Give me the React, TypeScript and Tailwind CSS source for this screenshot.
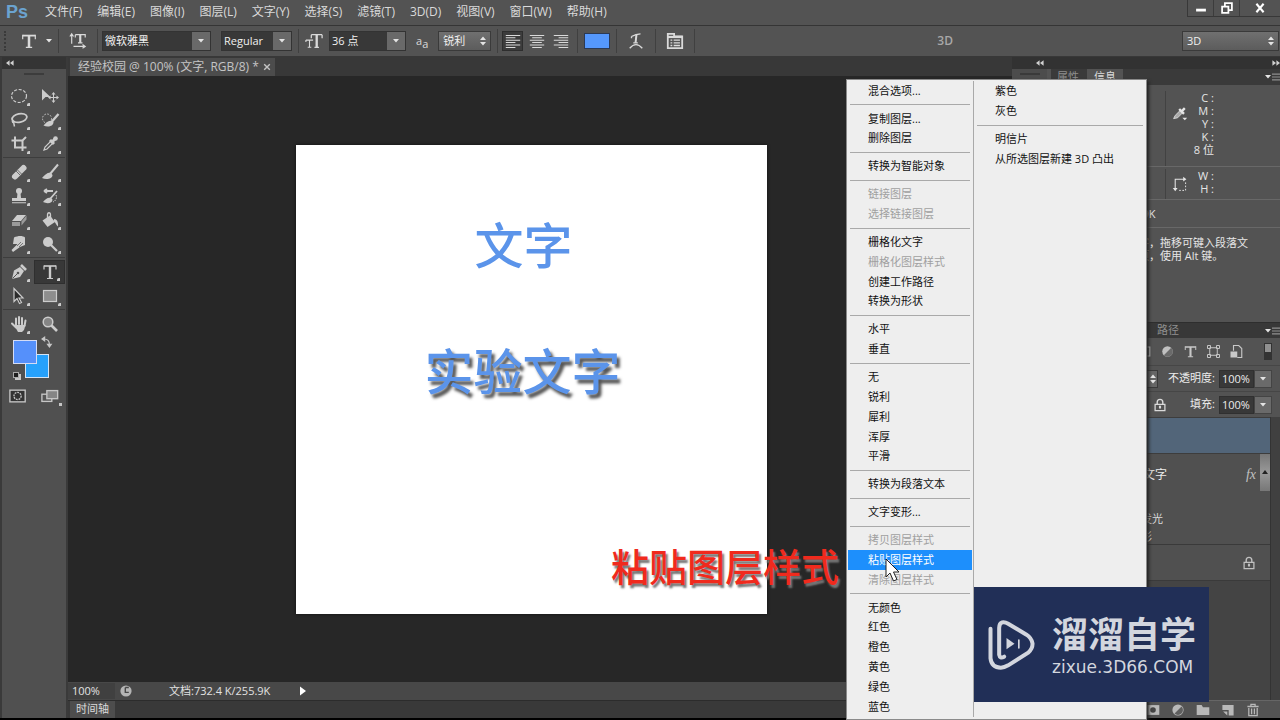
import type { ReactNode } from "react";
import clsx from "clsx";

const menus = ["文件(F)", "编辑(E)", "图像(I)", "图层(L)", "文字(Y)", "选择(S)", "滤镜(T)", "3D(D)", "视图(V)", "窗口(W)", "帮助(H)"];

type Item = { label: string; disabled?: boolean; active?: boolean };

const leftGroups: Item[][] = [
  [{ label: "混合选项..." }],
  [{ label: "复制图层..." }, { label: "删除图层" }],
  [{ label: "转换为智能对象" }],
  [{ label: "链接图层", disabled: true }, { label: "选择链接图层", disabled: true }],
  [{ label: "栅格化文字" }, { label: "栅格化图层样式", disabled: true }, { label: "创建工作路径" }, { label: "转换为形状" }],
  [{ label: "水平" }, { label: "垂直" }],
  [{ label: "无" }, { label: "锐利" }, { label: "犀利" }, { label: "浑厚" }, { label: "平滑" }],
  [{ label: "转换为段落文本" }],
  [{ label: "文字变形..." }],
  [{ label: "拷贝图层样式", disabled: true }, { label: "粘贴图层样式", active: true }, { label: "清除图层样式", disabled: true }],
  [{ label: "无颜色" }, { label: "红色" }, { label: "橙色" }, { label: "黄色" }, { label: "绿色" }, { label: "蓝色" }],
];

const rightGroups: Item[][] = [
  [{ label: "紫色" }, { label: "灰色" }],
  [{ label: "明信片" }, { label: "从所选图层新建 3D 凸出" }],
];

function Icon({ children, className = "size-5" }: { children: ReactNode; className?: string }) {
  return (
    <svg viewBox="0 0 20 20" className={clsx("shrink-0", className)} fill="none" stroke="currentColor" strokeWidth="1.5">
      {children}
    </svg>
  );
}

function SerifT({ className }: { className?: string }) {
  return (
    <Icon className={className}>
      <path d="M3 3v5M17 3v5M6.500 17h7" strokeWidth="1.300" />
      <path d="M3 4h14" strokeWidth="2" />
      <path d="M10 4v13" strokeWidth="2.800" />
    </Icon>
  );
}

const toolGroups: { name: string; art: ReactNode; selected?: boolean; plain?: boolean }[][] = [
  [
    { name: "椭圆选框", art: <ellipse cx="10" cy="10" rx="7.5" ry="6.5" strokeDasharray="3 1.6" strokeWidth="1.2" /> },
    {
      name: "移动",
      plain: true,
      art: (
        <>
          <path d="M2 3v11.500l3.500-3.500h5z" fill="currentColor" stroke="none" />
          <path d="M13.500 7.500v8M9.500 11.500h8" strokeWidth="1" />
          <path d="M13.500 6l2 2.500h-4zM13.500 17l2-2.500h-4zM8 11.500l2.500-2v4zM19 11.500l-2.500-2v4z" fill="currentColor" stroke="none" />
        </>
      ),
    },
    {
      name: "套索",
      art: (
        <>
          <ellipse cx="10.500" cy="8" rx="7.500" ry="4.200" transform="rotate(-12 10.500 8)" strokeWidth="1.800" />
          <path d="M4 10c-1.500 2 0 3 1.500 2.500M4.500 12l1 4.500" strokeWidth="1.500" />
        </>
      ),
    },
    {
      name: "快速选择",
      art: (
        <>
          <circle cx="7" cy="8.500" r="4.500" strokeDasharray="1.500 1.500" strokeWidth="1" />
          <path d="M18.500 4l-7 8" strokeWidth="2.400" />
          <path d="M12.500 11c-3-1-6 1-9 4.500 4 2 10 1 10-3.500z" fill="currentColor" stroke="none" />
        </>
      ),
    },
    { name: "裁剪", art: <path d="M6 2.500v11h11.500M2.500 6.500h11V17M13 7l4-4" strokeWidth="2" /> },
    {
      name: "吸管",
      art: (
        <>
          <path d="M4 16l1-3 6-6 2 2-6 6z" strokeWidth="1.200" />
          <path d="M10 6l4 4M12 8l4-4" strokeWidth="3" />
          <circle cx="15.500" cy="4.500" r="2.300" fill="currentColor" stroke="none" />
        </>
      ),
    },
  ],
  [
    {
      name: "修复画笔",
      art: (
        <>
          <path d="M6 14.500l8.500-8.500" strokeWidth="6" strokeLinecap="round" />
          <path d="M8.500 8l4 4M11 13l-4-4" stroke="#6b6b6b" strokeWidth="1" />
        </>
      ),
    },
    {
      name: "画笔",
      art: (
        <>
          <path d="M18 2.500l-8 9.500" strokeWidth="2" />
          <path d="M11 11c-3-1-5.500 1-9 5 4 2 10.500 1 10.500-3z" fill="currentColor" stroke="none" />
        </>
      ),
    },
    {
      name: "仿制图章",
      art: (
        <>
          <circle cx="10" cy="5" r="3" fill="currentColor" stroke="none" />
          <path d="M8.500 7h3l.5 5h-4zM3 12h14v3H3zM3 16.200h14v1H3z" fill="currentColor" stroke="none" />
        </>
      ),
    },
    {
      name: "历史记录画笔",
      art: (
        <>
          <path d="M17 5l-7 8M4 5h9M4 5l3-2M4 5l3 2" strokeWidth="1.800" />
          <path d="M11 12c-3-1-5.500 1-8 4 4 2 9.500 1.500 9.500-2.500z" fill="currentColor" stroke="none" />
          <path d="M16 9c1.500 3-.5 6-3 7" strokeWidth="1" strokeDasharray="1.500 1" />
        </>
      ),
    },
    {
      name: "橡皮擦",
      art: (
        <>
          <path d="M8 5h9l-5 6H3z" fill="currentColor" stroke="none" />
          <path d="M3 12h8v4H3zM12.500 11.500l5-6v4l-5 6z" fill="#9a9a9a" stroke="none" />
        </>
      ),
    },
    {
      name: "油漆桶",
      art: (
        <>
          <path d="M2.500 10.500l7.500-5 5 6.500-7.500 5z" fill="currentColor" stroke="none" />
          <path d="M7.500 10V5c0-3 3-3 3 0v3" strokeWidth="1.300" />
          <path d="M14 9c3 0 4.500 3 4 7.500-1.500-1-2.500-4-4-5z" fill="currentColor" stroke="none" />
        </>
      ),
    },
    {
      name: "涂抹",
      art: (
        <>
          <path d="M5 3.500c4-2 9-2 11 0V11l-5 2-7 5-1.500-2 6-6H4z" fill="currentColor" stroke="none" />
          <path d="M8 12l4-4M10 13l4-4" stroke="#777" strokeWidth="1" />
        </>
      ),
    },
    {
      name: "减淡",
      art: (
        <>
          <circle cx="8" cy="8" r="5" fill="currentColor" stroke="none" />
          <path d="M11 11l6 6" strokeWidth="2.200" />
        </>
      ),
    },
  ],
  [
    {
      name: "钢笔",
      art: (
        <>
          <path d="M3 17l2-8.500L11 5l4 4-4 6z" fill="currentColor" stroke="none" />
          <path d="M3.500 16.500l5-5" stroke="#555" strokeWidth="1" />
          <circle cx="9" cy="11" r="1.300" fill="#555" stroke="none" />
          <path d="M12 3l5 5" strokeWidth="2.600" />
        </>
      ),
    },
    {
      name: "横排文字",
      selected: true,
      art: (
        <>
          <path d="M4 3.500v4M16 3.500v4M7 16.500h6" strokeWidth="1.200" />
          <path d="M4 4h12" strokeWidth="1.600" />
          <path d="M10 4v12" strokeWidth="2.400" />
        </>
      ),
    },
    { name: "路径选择", art: <path d="M5 2.500v13l3-3 2.500 5 2-1-2.500-4.500h4z" fill="#2b2b2b" strokeWidth="1.200" /> },
    { name: "矩形", art: <rect x="3.500" y="4.500" width="13" height="11" fill="#8d8d8d" strokeWidth="1.200" /> },
  ],
  [
    {
      name: "抓手",
      art: (
        <>
          <path d="M7 11V4.500M10 10V3M13 10.500V4M15.500 12l1-5.500M3 9.500l4 4" strokeWidth="2" strokeLinecap="round" />
          <path d="M5 11h11.500l-1.500 5-2 2H9z" fill="currentColor" stroke="none" />
        </>
      ),
    },
    {
      name: "缩放",
      plain: true,
      art: (
        <>
          <circle cx="8" cy="8" r="4.800" fill="#858585" />
          <path d="M11.500 11.500l5.500 5.500" strokeWidth="2.600" />
        </>
      ),
    },
  ],
];

function Down() {
  return (
    <svg viewBox="0 0 6 4" className="h-1 w-1.5">
      <path d="M0 0h6L3 3.500z" fill="#e4e4e4" />
    </svg>
  );
}

function UpDown() {
  return (
    <svg viewBox="0 0 6 10" className="h-2.5 w-1.5">
      <path d="M0 4h6L3 .5zM0 6h6L3 9.500z" fill="#e4e4e4" />
    </svg>
  );
}

function Combo({ label, value, className }: { label: string; value: string; className: string }) {
  return (
    <div className={clsx("relative h-5 shrink-0 border border-[#333] bg-[#383838]", className)}>
      <select aria-label={label} className="h-full w-full appearance-none bg-transparent pr-5 pl-0.5 text-[#f0f0f0] outline-none">
        <option>{value}</option>
      </select>
      <span className="pointer-events-none absolute inset-y-0 right-0 flex w-[18px] items-center justify-center bg-[#696969]">
        <Down />
      </span>
    </div>
  );
}

function StepSelect({ label, value, className }: { label: string; value: string; className: string }) {
  return (
    <div className={clsx("relative h-5 shrink-0 border border-[#3a3a3a] bg-linear-to-b from-[#707070] to-[#5c5c5c]", className)}>
      <select aria-label={label} className="h-full w-full appearance-none bg-transparent pr-4 pl-1 text-[#f0f0f0] outline-none">
        <option>{value}</option>
      </select>
      <span className="pointer-events-none absolute inset-y-0 right-1 flex items-center">
        <UpDown />
      </span>
    </div>
  );
}

function Sep() {
  return <div className="h-6 w-px shrink-0 bg-[#404040]" />;
}

function Lines({ d }: { d: string }) {
  return (
    <Icon className="h-5 w-4">
      <path d={d} strokeWidth="1.300" />
    </Icon>
  );
}

function MenuBar() {
  return (
    <header className="flex h-[26px] shrink-0 items-start border-b border-[#353535]">
      <div className="w-10 pl-1.5 font-['Liberation_Sans',sans-serif] text-lg leading-6 font-bold text-[#6ba3d0]">Ps</div>
      <nav className="flex h-6 flex-1 items-center gap-[15px] pl-[5px] text-xs">
        {menus.map((m) => (
          <button key={m} className="whitespace-nowrap">{m}</button>
        ))}
      </nav>
      <div className="flex h-[17px] border-b border-l border-[#383838] text-white">
        <button aria-label="最小化" className="flex w-[26px] items-center justify-center border-r border-[#3c3c3c]">
          <Icon className="size-3.5"><path d="M3 13h14" strokeWidth="4" /></Icon>
        </button>
        <button aria-label="还原" className="flex w-[26px] items-center justify-center border-r border-[#3c3c3c]">
          <Icon className="size-3.5"><path d="M7 8V3h10v10h-4M3 8h9v9H3z" strokeWidth="2.500" /></Icon>
        </button>
        <button aria-label="关闭" className="flex w-10 items-center justify-center">
          <Icon className="size-3"><path d="M4 3l12 14M16 3L4 17" strokeWidth="3.500" /></Icon>
        </button>
      </div>
    </header>
  );
}

function OptionsBar() {
  return (
    <div className="flex h-[31px] shrink-0 items-center border-b border-[#383838] text-[11px]">
      <div className="ml-1 h-5 w-1 border-l-2 border-dotted border-[#3a3a3a]" />
      <button aria-label="工具预设" className="ml-3 flex items-center gap-2">
        <SerifT className="size-[18px]" />
        <Down />
      </button>
      <div className="ml-1.5"><Sep /></div>
      <button aria-label="切换文本取向" className="ml-2.5">
        <Icon className="size-[18px]">
          <path d="M7 3h11v3M7 3v3M10 12h5M3 3v10M1 5l2-3 2 3M5 16h13M15 14l3 2-3 2" strokeWidth="1.300" />
          <path d="M12.500 3v9" strokeWidth="2.400" />
        </Icon>
      </button>
      <div className="ml-2.5"><Sep /></div>
      <div className="ml-1 flex items-center gap-2.5">
        <Combo label="字体" value="微软雅黑" className="w-[109px]" />
        <Combo label="字体样式" value="Regular" className="w-[71px]" />
      </div>
      <div className="ml-1.5"><Sep /></div>
      <Icon className="ml-1.5 size-[18px]">
        <path d="M7 3h12M7 3v4M19 3v4M10.500 17h5" strokeWidth="1.400" />
        <path d="M13 3v14" strokeWidth="2.600" />
        <path d="M1 9h8M5 9v8M3 17h4M1 9v2" strokeWidth="1.200" />
      </Icon>
      <Combo label="字号" value="36 点" className="ml-1.5 w-[77px]" />
      <span className="ml-2.5 text-[11px]">a<sub className="text-[11px]">a</sub></span>
      <StepSelect label="消除锯齿" value="锐利" className="ml-2.5 w-[53px]" />
      <div className="ml-1.5"><Sep /></div>
      <div className="ml-1 flex items-center gap-1">
        <button aria-label="左对齐" className="flex h-5 w-[21px] items-center justify-center border border-[#2e2e2e] bg-[#3c3c3c]">
          <Lines d="M1 3h18M1 6h12M1 9h18M1 12h12M1 15h18M1 18h12" />
        </button>
        <button aria-label="居中对齐" className="flex w-[19px] justify-center">
          <Lines d="M1 3h18M4 6h12M1 9h18M4 12h12M1 15h18M4 18h12" />
        </button>
        <button aria-label="右对齐" className="flex w-[21px] justify-center">
          <Lines d="M1 3h18M7 6h12M1 9h18M7 12h12M1 15h18M7 18h12" />
        </button>
      </div>
      <div className="ml-1.5"><Sep /></div>
      <button aria-label="文本颜色" className="ml-1.5 h-4 w-[26px] border border-[#2c3a55] bg-[#5598fd]" />
      <div className="ml-1.5"><Sep /></div>
      <button aria-label="文字变形" className="ml-2.5">
        <Icon className="size-[18px]">
          <path d="M5 5q5-3 10-3M7 12h5M5 5v2M3 18q7-8 14 0" strokeWidth="1.500" />
          <path d="M10.500 3l-1 9" strokeWidth="2.200" />
        </Icon>
      </button>
      <div className="ml-2.5"><Sep /></div>
      <button aria-label="字符面板" className="ml-2.5">
        <Icon className="size-[18px]">
          <path d="M2 2h7v3h9v13H2z" strokeWidth="2" />
          <path d="M2 5.500h16" strokeWidth="2.500" />
          <path d="M5 9h2M8.500 9h7M5 12h2M8.500 12h7M5 15h2M8.500 15h7" strokeWidth="1.400" />
        </Icon>
      </button>
      <div className="ml-2.5"><Sep /></div>
      <span className="mr-[229px] ml-auto text-xs font-semibold text-[#a8a8a8]">3D</span>
      <StepSelect label="工作区" value="3D" className="mr-px w-[97px]" />
    </div>
  );
}

function Toolbox() {
  return (
    <aside className="w-[68px] shrink-0 border-r-2 border-l-2 border-[#3a3a3a] bg-[#505050]">
      <button aria-label="折叠工具栏" className="flex h-3 w-full items-center bg-[#343434] pl-1 text-[#d0d0d0]">
        <Icon className="size-2"><path d="M9 3v14L0 10zM19 3v14l-9-7z" fill="currentColor" stroke="none" /></Icon>
      </button>
      <div className="mx-auto mt-1 mb-[9px] h-0.5 w-5 bg-[#3c3c3c]" />
      {toolGroups.map((group, g) => (
        <div
          key={g}
          className={clsx("mx-px grid grid-cols-2", g < toolGroups.length - 1 && "mb-0.5 border-b border-[#3d3d3d] pb-px")}
        >
          {group.map((tool) => (
            <button
              key={tool.name}
              aria-label={tool.name}
              className={clsx(
                "relative flex h-6 items-center justify-center text-[#cccccc]",
                tool.selected && "border border-[#2f2f2f] bg-[#383838]",
              )}
            >
              <Icon className="size-5">{tool.art}</Icon>
              {!tool.plain && <span className="absolute right-1 bottom-0.5 size-[3px] rounded-tl-xs bg-[#cccccc]" />}
            </button>
          ))}
        </div>
      ))}
      <div className="relative mt-1 ml-[9px] h-[42px] w-[44px]">
        <button aria-label="背景色" className="absolute right-1.5 bottom-1 size-6 border border-[#d5e4f5] bg-[#26a1fc]" />
        <button aria-label="前景色" className="absolute top-0 left-0.5 size-6 border border-[#d5dcf5] bg-[#5590fb]" />
        <button aria-label="切换颜色" className="absolute -top-1 right-0.5 text-[#c6c6c6]">
          <Icon className="size-3">
            <path d="M5 5q9 0 9 9" strokeWidth="2" />
            <path d="M7 0v10L0 5zM9 13h10l-5 7z" fill="currentColor" stroke="none" />
          </Icon>
        </button>
        <span className="absolute bottom-0.5 left-1 size-1.5 bg-[#c6c6c6]" />
        <button aria-label="默认颜色" className="absolute bottom-1 left-0.5 size-1.5 border border-[#aaa] bg-[#1e1e1e]" />
      </div>
      <div className="mt-1 grid grid-cols-2 text-[#c6c6c6]">
        <button aria-label="快速蒙版" className="flex h-5 items-center justify-center">
          <Icon className="size-[18px]">
            <rect x="1" y="3.500" width="17" height="13" fill="#333" />
            <circle cx="9.500" cy="10" r="4" strokeDasharray="2 1" />
          </Icon>
        </button>
        <button aria-label="屏幕模式" className="relative flex h-5 items-center justify-center">
          <Icon className="size-[18px]">
            <rect x="1" y="8" width="11" height="8" fill="#555" />
            <rect x="6.500" y="4" width="12" height="9" fill="#858585" />
          </Icon>
          <span className="absolute right-1 bottom-0 size-[3px] bg-[#c6c6c6]" />
        </button>
      </div>
    </aside>
  );
}

function Document() {
  return (
    <main className="flex min-w-0 flex-1 flex-col">
      <div className="flex h-[19px] shrink-0 items-end bg-[#383838] pl-0.5">
        <div className="flex h-[18px] items-center gap-1 bg-[#4c4c4c] pr-1 pl-2 text-xs whitespace-nowrap text-[#c4c4c4]">
          经验校园 @ 100% (文字, RGB/8) *
          <button aria-label="关闭文档">
            <Icon className="size-2"><path d="M3 3l14 14M17 3L3 17" strokeWidth="3.500" /></Icon>
          </button>
        </div>
      </div>
      <div className="flex flex-1 items-center justify-center bg-[#272727] pr-[18px]">
        <div className="relative h-[469px] w-[471px] bg-white text-[49px] leading-none font-medium text-[#5b94ea] shadow-[0_0_3px_#111]">
          <span className="absolute top-[76px] left-[179px] whitespace-nowrap">文字</span>
          <span className="absolute top-[202px] left-[129px] whitespace-nowrap text-shadow-[3px_4px_3px_#555]">实验文字</span>
        </div>
      </div>
      <div className="flex h-[18px] shrink-0 items-center bg-[#484848] text-[11px] text-[#e2e2e2]">
        <span className="w-[47px] bg-[#404040] pl-1">100%</span>
        <Icon className="ml-1 size-3.5">
          <circle cx="10" cy="10" r="8" fill="#b4b4b4" stroke="none" />
          <path d="M9 5v7h5M9 5h5" stroke="#484848" strokeWidth="2" />
        </Icon>
        <span className="ml-9">文档:732.4 K/255.9K</span>
        <button aria-label="状态栏选项" className="ml-7">
          <Icon className="size-2.5"><path d="M4 1v18l12-9z" fill="#fff" stroke="none" /></Icon>
        </button>
      </div>
      <div className="flex h-[18px] shrink-0 border-t border-[#2c2c2c] bg-[#393939] pl-0.5 text-[11px]">
        <button className="bg-[#4d4d4d] px-1.5">时间轴</button>
      </div>
    </main>
  );
}

function PanelMenu() {
  return (
    <button aria-label="面板菜单" className="ml-auto flex items-center gap-px self-center">
      <Down />
      <Icon className="size-2"><path d="M0 3h20M0 10h20M0 17h20" strokeWidth="3" /></Icon>
    </button>
  );
}

function Lock({ className }: { className?: string }) {
  return (
    <Icon className={className}>
      <path d="M6 9V6a4 4 0 0 1 8 0v3" strokeWidth="2" />
      <path d="M3 9h14v9H3z" strokeWidth="1.800" />
      <path d="M10 11v4" strokeWidth="3" />
    </Icon>
  );
}

function Percent({ id, label }: { id: string; label: string }) {
  return (
    <div className="flex h-[26px] items-center border-t border-[#464646] pr-2">
      {id === "opacity" ? (
        <div className="flex h-[18px] flex-1 items-center justify-end border border-[#3a3a3a] bg-[#666] pr-px">
          <UpDown />
        </div>
      ) : (
        <Lock className="ml-auto size-3.5" />
      )}
      <label htmlFor={id} className={clsx("text-right text-[#ececec]", id === "opacity" ? "w-[57px]" : "w-[48px]")}>
        {label}
      </label>
      <input
        id={id}
        defaultValue="100%"
        className="ml-1 h-[18px] w-[35px] border border-[#303030] bg-[#383838] pl-0.5 text-[#ececec] outline-none"
      />
      <button aria-label={label} className="flex h-[18px] w-[18px] items-center justify-center border border-[#444] bg-[#6a6a6a]">
        <Down />
      </button>
    </div>
  );
}

function EyeDropper() {
  return (
    <Icon className="size-4">
      <path d="M2 17l2-4 6-6 3 3-6 6z" fill="#aaa" strokeWidth="1" />
      <path d="M9 5l6 6M12 8l4-4" strokeWidth="3" />
      <path d="M13 16h6l-3 3z" fill="currentColor" stroke="none" />
    </Icon>
  );
}

function InfoPanel() {
  return (
    <section className="flex h-[237px] shrink-0 flex-col bg-[#535353] text-[11px] leading-[13px] text-[#e6e6e6]">
      <div className="flex h-[82px] border-b border-[#686868] pt-1.5">
        <div className="flex w-[115px] shrink-0 border-r border-[#424242]" />
        <div className="flex items-start pt-3.5 pl-1.5"><EyeDropper /></div>
        <div className="w-[26px] text-right">
          {["C :", "M :", "Y :", "K :", "8 位"].map((t) => (
            <div key={t} className="whitespace-nowrap">{t}</div>
          ))}
        </div>
      </div>
      <div className="flex h-[33px] border-b border-[#686868] pt-0.5">
        <div className="w-[115px] shrink-0 border-r border-[#424242]" />
        <div className="flex items-center pl-1.5">
          <Icon className="size-4">
            <path d="M4 17V4h12" strokeWidth="1.300" />
            <path d="M14 1l4 3-4 3zM1 15h6l-3 4z" fill="currentColor" stroke="none" />
            <path d="M17 8v10H8" strokeWidth="1.200" strokeDasharray="2 2" />
          </Icon>
        </div>
        <div className="w-[26px] text-right">
          <div>W :</div>
          <div>H :</div>
        </div>
      </div>
      <div className="flex h-[28px] items-center border-b border-[#686868] pl-1.5">文档:732.4K/255.9K</div>
      <p className="pt-2 pl-2.5 whitespace-nowrap">
        点按可置入点文字，拖移可键入段落文
        <br />
        字。要用附加选项，使用 Alt 键。
      </p>
    </section>
  );
}

function LayersPanel() {
  return (
    <section className="flex flex-1 flex-col bg-[#535353] text-[11px]">
      <div className="flex h-4 shrink-0 items-center border-t border-[#2e2e2e] bg-[#383838] pl-[106px] text-[#909090]">
        <button>路径</button>
        <PanelMenu />
      </div>
      <div className="flex h-[27px] shrink-0 items-center justify-end gap-2 pr-2 text-[#c8c8c8]">
        <Icon className="size-[15px]"><rect x="3" y="4" width="14" height="12" /></Icon>
        <Icon className="size-[15px]">
          <circle cx="10" cy="10" r="7" fill="#c0c0c0" stroke="none" />
          <path d="M5 15L15 5a7 7 0 0 1-10 10z" fill="#6a6a6a" stroke="none" />
        </Icon>
        <SerifT className="size-[15px]" />
        <Icon className="size-[15px]">
          <path d="M5 5h10v10H5zM2 2h4v4H2zM14 2h4v4h-4zM2 14h4v4H2zM14 14h4v4h-4z" strokeWidth="1.300" />
        </Icon>
        <Icon className="size-[15px]">
          <path d="M6 9V2h7l4 4v12h-6" strokeWidth="1.500" />
          <path d="M2 10h9v8H2z" fill="currentColor" stroke="none" />
        </Icon>
        <div className="ml-3 h-[17px] w-2 border border-[#333] bg-linear-to-b from-[#909090] from-50% to-[#333] to-50%" />
      </div>
      <Percent id="opacity" label="不透明度:" />
      <Percent id="fill" label="填充:" />
      <div className="flex flex-1">
        <div className="relative flex flex-1 flex-col bg-[#444]">
          <div className="h-[37px] border-y border-[#3d3d3d] bg-[#526579]" />
          <div className="h-[91px] border-b border-[#3a3a3a] bg-[#505050]">
            <div className="flex h-[42px] items-center justify-between pr-3.5 pl-[68px] text-xs text-[#ececec]">
              <span>实验文字</span>
              <i className="font-['Liberation_Serif',serif] text-sm text-[#c0c0c0]">fx</i>
            </div>
            <div className="mt-3.5 pl-[79px] leading-[18px]">
              <div>外发光</div>
              <div>投影</div>
            </div>
          </div>
          <div className="flex h-9 items-center justify-end border-b border-[#3a3a3a] bg-[#505050] pr-3.5 text-[#c0c0c0]">
            <Lock className="size-3.5" />
          </div>
          <div className="absolute top-[37px] right-0 h-[37px] w-2.5 bg-linear-to-b from-[#777] via-[#999] to-[#777]">
            <svg viewBox="0 0 6 4" className="mx-auto mt-4 h-1 w-1.5"><path d="M0 4h6L3 0z" fill="#222" /></svg>
          </div>
        </div>
        <div className="w-2.5 border-l border-[#333] bg-[#404040]" />
      </div>
      <div className="flex h-[18px] shrink-0 items-center justify-end gap-[11px] border-t border-[#666] pr-5 text-[#b8b8b8]">
        <Icon className="size-3.5">
          <path d="M1 3h18v14H1z" fill="currentColor" stroke="none" />
          <circle cx="10" cy="10" r="4" fill="#444" stroke="none" />
        </Icon>
        <Icon className="size-3.5">
          <circle cx="10" cy="10" r="8" fill="currentColor" stroke="none" />
          <path d="M5 15L15 5a7 7 0 0 1-10 10z" fill="#5f5f5f" stroke="none" />
        </Icon>
        <Icon className="size-3.5"><path d="M1 3h7l2 3h9v11H1z" fill="currentColor" stroke="none" /></Icon>
        <Icon className="size-3.5">
          <path d="M2 3h16v15h-7v-8H2z" fill="currentColor" stroke="none" />
          <path d="M3 12h6v6z" fill="currentColor" stroke="none" />
        </Icon>
        <Icon className="size-3.5">
          <path d="M2 5h16M7 5V2h6v3M4 7v11h12V7M8 8v8M12 8v8" strokeWidth="1.800" />
        </Icon>
      </div>
    </section>
  );
}

function RightDock() {
  return (
    <aside className="flex w-[268px] shrink-0 flex-col">
      <div className="flex h-3 shrink-0 items-center justify-between bg-[#323232] pl-6 text-[#d0d0d0]">
        <Icon className="size-2"><path d="M9 3v14L0 10zM19 3v14l-9-7z" fill="currentColor" stroke="none" /></Icon>
        <Icon className="size-2"><path d="M1 3v14l9-7zM11 3v14l9-7z" fill="currentColor" stroke="none" /></Icon>
      </div>
      <div className="flex flex-1">
        <div className="w-[35px] shrink-0 bg-[#4c4c4c] pt-1">
          <div className="mx-auto h-0.5 w-5 bg-[#3a3a3a]" />
        </div>
        <div className="ml-1 flex min-w-0 flex-1 flex-col">
          <div className="flex h-4 shrink-0 items-start bg-[#3a3a3a] pl-1.5 text-[11px] text-[#8e8e8e]">
            <button className="w-[30px] text-left">属性</button>
            <button className="h-4 w-9 bg-[#535353] text-[#dcdcdc]">信息</button>
            <PanelMenu />
          </div>
          <InfoPanel />
          <LayersPanel />
        </div>
      </div>
    </aside>
  );
}

function MenuColumn({ groups, row }: { groups: Item[][]; row: string }) {
  return groups.map((group, g) => (
    <div key={g} className="contents">
      {g > 0 && (
        <div className="flex h-2 shrink-0 items-center px-0.5">
          <div className="h-px flex-1 bg-[#a9a9a9]" />
        </div>
      )}
      {group.map((item) => (
        <button
          key={item.label}
          disabled={item.disabled}
          className={clsx(
            "flex items-center pl-5 text-left whitespace-nowrap",
            row,
            item.disabled && "text-[#a0a0a0]",
            item.active && "bg-[#1d8ffc] text-white",
          )}
        >
          {item.label}
        </button>
      ))}
    </div>
  ));
}

function ContextMenu() {
  return (
    <div className="absolute top-[79px] right-[133px] bottom-0 flex w-[301px] border border-[#8a8a8a] bg-[#eee] pt-px pb-0.5 text-[11px] text-[#111] shadow-[2px_2px_3px_#222]">
      <div className="flex w-[127px] flex-col border-r border-[#a9a9a9] px-px">
        <MenuColumn groups={leftGroups} row="min-h-0 flex-1" />
      </div>
      <div className="flex flex-1 flex-col px-px">
        <MenuColumn groups={rightGroups} row="h-5 shrink-0" />
      </div>
      {/* mouse pointer */}
      <svg viewBox="0 0 15 24" className="absolute top-[478px] left-[38px] h-6 w-[15px]">
        <path d="M1 1v18l4-4 3.500 8 3.500-1.500-3.500-7.500H14z" fill="#fff" stroke="#222" strokeWidth="1" />
      </svg>
    </div>
  );
}

function Watermark() {
  return (
    <div className="absolute right-[71px] bottom-[18px] flex h-[115px] w-[235px] items-center gap-[17px] bg-[#212f57] pl-3.5 text-[#d3d6de]">
      <svg viewBox="0 0 140 150" className="h-[50px] w-[47px]" fill="none" stroke="currentColor" strokeWidth="12" strokeLinecap="round">
        <path d="M7 26V115Q10 143 38 143Q48 143 60 136L120 98Q134 86 133 70Q130 54 115 44L60 11Q50 5 42 7Q33 10 33 24V104Q35 117 48 110" />
        <path d="M55 54v34l24-17z" fill="currentColor" stroke="none" />
        <path d="M92 60v24" strokeWidth="5" />
      </svg>
      <div className="whitespace-nowrap">
        <div className="text-[36px] leading-[44px] font-bold">溜溜自学</div>
        <div className="font-['DejaVu_Sans',sans-serif] text-[17px] leading-5">zixue.3D66.COM</div>
      </div>
    </div>
  );
}

export default function App() {
  return (
    <div className="relative flex h-screen min-h-[720px] w-full flex-col overflow-hidden bg-[#535353] font-['Open_Sans','Noto_Sans_CJK_SC',sans-serif] text-[#dadada]">
      <MenuBar />
      <OptionsBar />
      <div className="flex flex-1">
        <Toolbox />
        <Document />
        <RightDock />
      </div>
      <div className="h-0.5 shrink-0 bg-black" />
      <div className="absolute right-[441px] bottom-[134px] text-[38px] leading-[40px] font-medium whitespace-nowrap text-[#f02a1d] text-shadow-[2px_3px_2px_#777]">
        粘贴图层样式
      </div>
      <ContextMenu />
      <Watermark />
    </div>
  );
}
